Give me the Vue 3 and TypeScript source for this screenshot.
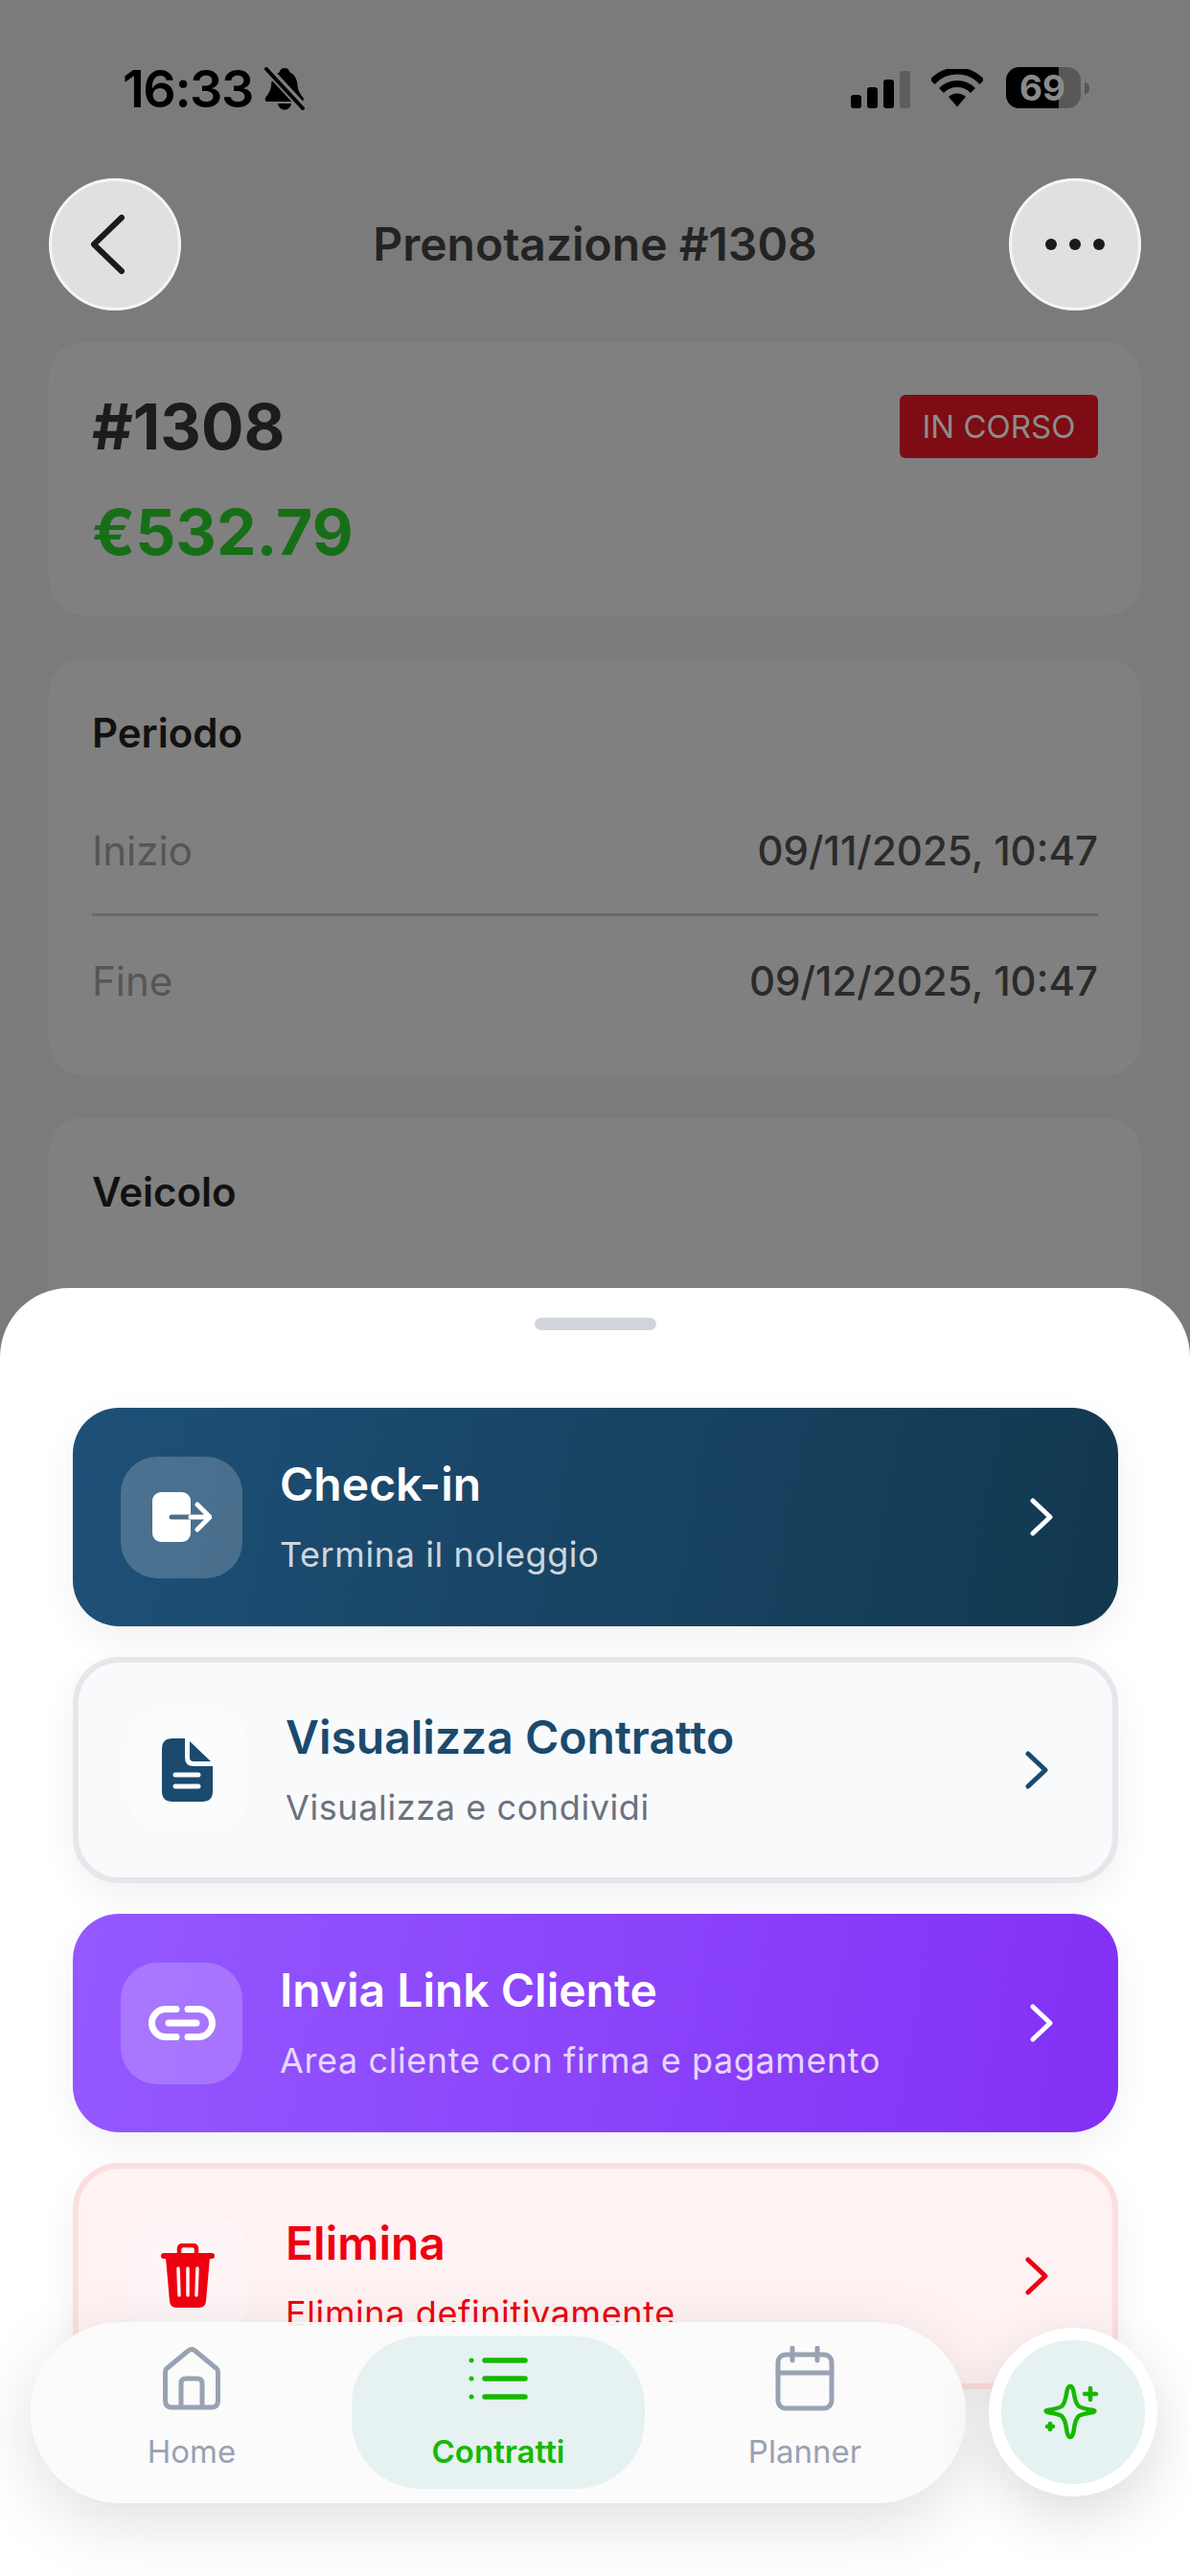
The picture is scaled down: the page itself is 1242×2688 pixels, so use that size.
<script setup lang="ts">
type ActionKind = 'checkin' | 'contract' | 'link' | 'delete'

interface SheetAction {
  kind: ActionKind
  title: string
  subtitle: string
  tone: 'navy' | 'plain' | 'violet' | 'danger'
}

const actions: SheetAction[] = [
  { kind: 'checkin', title: 'Check-in', subtitle: 'Termina il noleggio', tone: 'navy' },
  { kind: 'contract', title: 'Visualizza Contratto', subtitle: 'Visualizza e condividi', tone: 'plain' },
  { kind: 'link', title: 'Invia Link Cliente', subtitle: 'Area cliente con firma e pagamento', tone: 'violet' },
  { kind: 'delete', title: 'Elimina', subtitle: 'Elimina definitivamente', tone: 'danger' },
]

const period = [
  { label: 'Inizio', value: '09/11/2025, 10:47' },
  { label: 'Fine', value: '09/12/2025, 10:47' },
]
</script>

<template>
  <div class="screen">
    <div class="status">
      <div class="status-left">
        <span class="clock">16:33</span>
        <svg class="bell" width="42" height="45" viewBox="0 0 42 45">
          <path d="M21 1c3 0 5 2 5.500 4.500C32 8 34 13 34.500 19c.5 6 3 9 6 13 1 2 0 4-2 4H3c-2 0-3-2-2-4 3-4 5.500-7 6-13C7.500 13 10 8 15.500 5.500 16 3 18 1 21 1z" fill="#000" />
          <path d="M14 38h14c-.5 4-3.500 6.500-7 6.500S14.500 42 14 38z" fill="#000" />
          <path d="M2 1l38 41" stroke="#7e7e7e" stroke-width="9" />
          <path d="M2 2l38 41" stroke="#000" stroke-width="4" stroke-linecap="round" />
        </svg>
      </div>
      <div class="status-right">
        <div class="signal">
          <i class="bar b1"></i><i class="bar b2"></i><i class="bar b3"></i><i class="bar b4"></i>
        </div>
        <svg class="wifi" width="54" height="40" viewBox="0 0 54 40">
          <path d="M1 13.500C8 6 17 2 27 2s19 4 26 11.500" fill="none" stroke="#000" stroke-width="7" />
          <path d="M10.500 22.500C15 18 20.500 15.500 27 15.500s12 2.500 16.500 7" fill="none" stroke="#000" stroke-width="7" />
          <path d="M18 29c2.500-2 5.500-3.500 9-3.500s6.500 1.500 9 3.500L27 39.500z" fill="#000" />
        </svg>
        <div class="battery">
          <span class="battery-fill"></span>
          <span class="battery-level">69</span>
        </div>
        <i class="battery-tip"></i>
      </div>
    </div>

    <header class="topbar">
      <button class="round-btn" type="button" aria-label="Indietro">
        <svg width="38" height="62" viewBox="0 0 38 62">
          <path d="M34 3L5 31l29 28" fill="none" stroke="#1a1a1a" stroke-width="6" stroke-linecap="round" stroke-linejoin="round" />
        </svg>
      </button>
      <h1 class="page-title">Prenotazione #1308</h1>
      <button class="round-btn" type="button" aria-label="Altro">
        <svg width="62" height="14" viewBox="0 0 62 14">
          <circle cx="6" cy="7" r="6" fill="#1a1a1a" />
          <circle cx="31" cy="7" r="6" fill="#1a1a1a" />
          <circle cx="56" cy="7" r="6" fill="#1a1a1a" />
        </svg>
      </button>
    </header>

    <section class="card summary">
      <div class="summary-top">
        <span class="booking-id">#1308</span>
        <span class="badge">IN CORSO</span>
      </div>
      <div class="price">€532.79</div>
    </section>

    <section class="card period">
      <h2 class="card-title">Periodo</h2>
      <div v-for="(row, i) in period" :key="row.label" class="period-row" :class="{ ruled: i === 0 }">
        <span class="period-label">{{ row.label }}</span>
        <span class="period-value">{{ row.value }}</span>
      </div>
    </section>

    <section class="card vehicle">
      <h2 class="card-title">Veicolo</h2>
    </section>

    <!-- Action sheet raised over the dimmed booking page -->
    <div class="sheet">
      <div class="grabber"></div>
      <div class="actions">
        <button v-for="a in actions" :key="a.kind" class="action" :class="a.tone" type="button">
          <span class="action-icon">
            <svg v-if="a.kind === 'checkin'" width="62" height="54" viewBox="0 0 62 54">
              <rect x="0" y="1" width="40" height="52" rx="9" fill="#fff" />
              <path d="M20 27h20" stroke="#4f6e87" stroke-width="5" stroke-linecap="round" />
              <path d="M40 27h20M47 14l13 13-13 13" fill="none" stroke="#fff" stroke-width="5" stroke-linecap="round" stroke-linejoin="round" />
            </svg>
            <svg v-else-if="a.kind === 'contract'" width="54" height="66" viewBox="0 0 54 66">
              <path d="M11 0H24V20Q24 29 33 29H53V55Q53 66 42 66H11Q0 66 0 55V11Q0 0 11 0Z" fill="#1a4a6e" />
              <path d="M29 3L51 24H33Q29 24 29 20Z" fill="#1a4a6e" />
              <path d="M14 38H38M14 50H38" stroke="#f9fafb" stroke-width="5" stroke-linecap="round" />
            </svg>
            <svg v-else-if="a.kind === 'link'" width="70" height="36" viewBox="0 0 70 36">
              <path d="M29 3.500H18a14.500 14.500 0 0 0 0 29H29M41 3.500H52a14.500 14.500 0 0 1 0 29H41" fill="none" stroke="#fff" stroke-width="7" stroke-linecap="round" />
              <path d="M21 18H50" stroke="#fff" stroke-width="7" stroke-linecap="round" />
            </svg>
            <svg v-else width="58" height="68" viewBox="0 0 58 68">
              <path d="M20 12V6Q20 2 24 2H34Q38 2 38 6V12" fill="none" stroke="#ee0011" stroke-width="4.500" />
              <rect x="1" y="10" width="56" height="6" rx="3" fill="#ee0011" />
              <path d="M6 15H52L48 60Q47.500 67 41 67H17Q10.500 67 10 60Z" fill="#ee0011" />
              <path d="M19 26L20 54M29 26V54M39 26L38 54" stroke="#fef2f2" stroke-width="3.500" stroke-linecap="round" />
            </svg>
          </span>
          <span class="action-text">
            <span class="action-title">{{ a.title }}</span>
            <span class="action-sub">{{ a.subtitle }}</span>
          </span>
          <svg class="chevron" width="24" height="40" viewBox="0 0 24 40">
            <path d="M3 3l18 17L3 37" fill="none" stroke="currentColor" stroke-width="5" stroke-linecap="round" stroke-linejoin="round" />
          </svg>
        </button>
      </div>
    </div>

    <nav class="tabbar">
      <a class="tab">
        <span class="tab-glyph">
          <svg width="62" height="66" viewBox="0 0 62 66">
            <path d="M3.500 26Q3.500 24 5 22.500L28 3.500Q31 1.500 34 3.500L57 22.500Q58.500 24 58.500 26V56Q58.500 63 51.500 63H10.500Q3.500 63 3.500 56Z" fill="none" stroke="#98a2b3" stroke-width="5" stroke-linejoin="round" />
            <path d="M20 63V38Q20 33 25 33H37Q42 33 42 38V63" fill="none" stroke="#98a2b3" stroke-width="5" />
          </svg>
        </span>
        <span class="tab-label">Home</span>
      </a>
      <a class="tab active">
        <span class="tab-glyph">
          <svg width="62" height="44" viewBox="0 0 62 44">
            <circle cx="3" cy="3" r="2.500" fill="#16b800" />
            <circle cx="3" cy="22" r="2.500" fill="#16b800" />
            <circle cx="3" cy="41" r="2.500" fill="#16b800" />
            <path d="M17 3H59M17 22H59M17 41H59" stroke="#16b800" stroke-width="5.500" stroke-linecap="round" />
          </svg>
        </span>
        <span class="tab-label">Contratti</span>
      </a>
      <a class="tab">
        <span class="tab-glyph">
          <svg width="62" height="68" viewBox="0 0 62 68">
            <rect x="3" y="9" width="56" height="56" rx="8" fill="none" stroke="#98a2b3" stroke-width="5" />
            <path d="M3 28H59M18 2V15M44 2V15" fill="none" stroke="#98a2b3" stroke-width="5" stroke-linecap="round" />
          </svg>
        </span>
        <span class="tab-label">Planner</span>
      </a>
    </nav>

    <button class="assistant" type="button" aria-label="Assistente">
      <svg width="62" height="62" viewBox="0 0 62 62">
        <path d="M28 4Q31 4 32 12Q33.500 22 37 25Q40 27 52 29Q55 30 52 31Q40 33 37 35Q33.500 38 32 48Q31 57 28 57Q25 57 24 48Q22.500 38 19 35Q16 33 4 31Q1 30 4 29Q16 27 19 25Q22.500 22 24 12Q25 4 28 4Z" fill="none" stroke="#16b800" stroke-width="4.500" stroke-linejoin="round" />
        <path d="M49 6V18M43 12H55" stroke="#16b800" stroke-width="4.500" stroke-linecap="round" />
        <path d="M7 43V49M4 46H10" stroke="#16b800" stroke-width="4.500" stroke-linecap="round" />
      </svg>
    </button>
  </div>
</template>

<style scoped>
.screen {
  position: relative;
  width: 1242px;
  height: 2688px;
  overflow: hidden;
  background: #7b7b7b;
  font-family: Inter, "Noto Sans", sans-serif;
  color: #222;
}

/* status bar */
.status {
  height: 186px;
  box-sizing: border-box;
  padding: 70px 105px 0 128px;
  display: flex;
  justify-content: space-between;
  align-items: flex-start;
}
.status-left {
  display: flex;
  align-items: center;
  gap: 12px;
  height: 45px;
}
.clock {
  font-size: 54px;
  line-height: 45px;
  font-weight: 600;
  color: #000;
  letter-spacing: -1.5px;
}
.status-right {
  display: flex;
  align-items: flex-start;
}
.signal {
  display: flex;
  align-items: flex-end;
  gap: 6px;
  height: 41px;
  margin-top: 2px;
}
.bar {
  width: 11px;
  background: #000;
  border-radius: 3px;
}
.b1 { height: 14px; }
.b2 { height: 22px; }
.b3 { height: 30px; }
.b4 { height: 39px; background: #5e5e5e; }
.wifi {
  margin: 2px 24px 0 22px;
}
.battery {
  position: relative;
  width: 78px;
  height: 43px;
  border-radius: 14px;
  overflow: hidden;
  background: #585858;
  display: flex;
  align-items: center;
  justify-content: center;
}
.battery-fill {
  position: absolute;
  left: 0;
  top: 0;
  bottom: 0;
  width: 55px;
  background: #000;
}
.battery-level {
  position: relative;
  margin-left: -2px;
  font-size: 37px;
  font-weight: 700;
  color: #8a8a8a;
  line-height: 43px;
}
.battery-tip {
  width: 5px;
  height: 12px;
  margin: 16px 0 0 4px;
  border-radius: 0 5px 5px 0;
  background: #585858;
}

/* page header */
.topbar {
  margin: 0 51px;
  height: 138px;
  display: flex;
  align-items: center;
  justify-content: space-between;
}
.round-btn {
  width: 138px;
  height: 138px;
  box-sizing: border-box;
  padding: 0;
  border-radius: 50%;
  border: 3px solid #f5f5f5;
  background: #e0e0e0;
  display: flex;
  align-items: center;
  justify-content: center;
}
.round-btn:first-child svg {
  margin-left: -16px;
}
.page-title {
  margin: 0;
  font-size: 48px;
  line-height: 60px;
  font-weight: 600;
  color: #232323;
}

/* dimmed cards */
.card {
  margin: 0 51px;
  background: #808080;
  border-radius: 36px;
  padding: 0 45px;
}
.summary {
  margin-top: 33px;
  height: 285px;
  box-sizing: border-box;
  padding-top: 55px;
}
.summary-top {
  display: flex;
  justify-content: space-between;
  align-items: center;
  height: 66px;
}
.booking-id {
  font-size: 66px;
  line-height: 66px;
  font-weight: 700;
  color: #1c1c1c;
}
.badge {
  width: 207px;
  height: 66px;
  border-radius: 6px;
  background: #7e0c14;
  color: #8c8c8c;
  font-size: 33px;
  line-height: 66px;
  text-align: center;
}
.price {
  margin-top: 41px;
  font-size: 66px;
  line-height: 72px;
  font-weight: 700;
  color: #166f16;
}
.period {
  margin-top: 46px;
  height: 434px;
  box-sizing: border-box;
  padding-top: 52px;
}
.card-title {
  margin: 0;
  font-size: 42px;
  line-height: 50px;
  font-weight: 600;
  color: #111;
}
.period .card-title {
  margin-bottom: 31px;
}
.period-row {
  height: 135px;
  box-sizing: border-box;
  display: flex;
  align-items: center;
  justify-content: space-between;
  font-size: 42px;
}
.period-row.ruled {
  height: 135px;
  border-bottom: 3px solid #6a6a6a;
}
.period-label {
  color: #565656;
}
.period-value {
  font-weight: 500;
  color: #2b2b2b;
}
.vehicle {
  margin-top: 44px;
  height: 400px;
  box-sizing: border-box;
  padding-top: 53px;
}

/* bottom sheet */
.sheet {
  position: absolute;
  left: 0;
  right: 0;
  top: 1344px;
  bottom: 0;
  background: #fff;
  border-radius: 72px 72px 0 0;
  padding: 31px 75px 0 76px;
}
.grabber {
  width: 127px;
  height: 13px;
  margin: 0 auto;
  border-radius: 7px;
  background: #d1d5db;
}
.actions {
  margin-top: 81px;
  display: flex;
  flex-direction: column;
  gap: 32px;
}
.action {
  height: 228px;
  box-sizing: border-box;
  width: 100%;
  padding: 0 68px 0 50px;
  border: 0;
  border-radius: 48px;
  display: flex;
  align-items: center;
  text-align: left;
  font-family: inherit;
  box-shadow: 0 12px 36px rgba(0, 0, 0, 0.06);
}
.action-icon {
  width: 127px;
  height: 127px;
  flex: none;
  border-radius: 38px;
  display: flex;
  align-items: center;
  justify-content: center;
}
.action-text {
  flex: 1;
  margin-left: 39px;
  display: flex;
  flex-direction: column;
  gap: 18px;
}
.action-title {
  font-size: 48px;
  line-height: 60px;
  font-weight: 600;
}
.action-sub {
  font-size: 36px;
  line-height: 50px;
  letter-spacing: 0.6px;
}
.navy {
  background: linear-gradient(100deg, #1e5078, #12384f);
  color: #fff;
}
.violet {
  background: linear-gradient(100deg, #9459ff, #8230f5);
  color: #fff;
}
.navy .action-icon,
.violet .action-icon {
  background: rgba(255, 255, 255, 0.2);
}
.navy .action-sub,
.violet .action-sub {
  color: rgba(255, 255, 255, 0.8);
}
.plain,
.danger {
  height: 236px;
  border: 6px solid;
  padding-right: 67px;
}
.plain {
  background: #f9fafb;
  border-color: #e5e7eb;
  color: #1a4a6e;
}
.plain .action-sub {
  color: #6b7280;
}
.danger {
  background: #fef2f2;
  border-color: #fddede;
  color: #ee0011;
}
.plain .action-icon,
.danger .action-icon {
  background: rgba(255, 255, 255, 0.35);
}

/* floating tab bar */
.tabbar {
  position: absolute;
  left: 32px;
  top: 2423px;
  width: 976px;
  height: 189px;
  box-sizing: border-box;
  padding: 15px 8px;
  border-radius: 94px;
  background: rgba(251, 251, 251, 0.94);
  box-shadow: 0 20px 70px rgba(0, 0, 0, 0.13);
  display: grid;
  grid-template-columns: repeat(3, 320px);
}
.tab {
  width: 306px;
  height: 159px;
  justify-self: center;
  box-sizing: border-box;
  padding-top: 10px;
  border-radius: 72px;
  display: flex;
  flex-direction: column;
  align-items: center;
  color: #98a2b3;
}
.tab.active {
  background: #e6f1f1;
  color: #16b800;
}
.tab-glyph {
  height: 68px;
  display: flex;
  align-items: center;
  justify-content: center;
}
.tab-label {
  margin-top: 22px;
  font-size: 33px;
  line-height: 40px;
}
.active .tab-label {
  font-weight: 600;
}
.assistant {
  position: absolute;
  left: 1032px;
  top: 2429px;
  width: 176px;
  height: 176px;
  box-sizing: border-box;
  padding: 0;
  border: 13px solid #fff;
  border-radius: 50%;
  background: #e6f1f1;
  box-shadow: 0 20px 60px rgba(0, 0, 0, 0.14);
  display: flex;
  align-items: center;
  justify-content: center;
}
</style>

<style>
html,
body {
  margin: 0;
  padding: 0;
}
</style>
